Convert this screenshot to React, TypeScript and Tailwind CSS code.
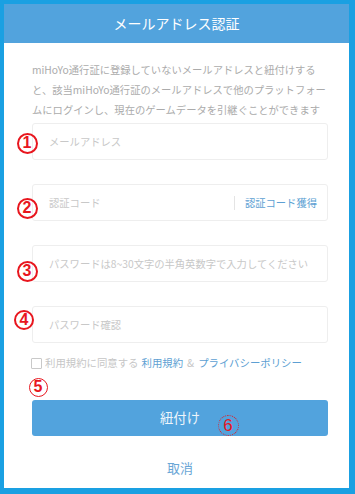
import React from "react";

const FONT = { fontFamily: '"Noto Sans CJK JP", "Noto Sans", sans-serif' };

function Mark({ n, x, y, d = 21, variant = "thick" }: { n: string; x: number; y: number; d?: number; variant?: "thick" | "thin" | "dotted" }) {
  const cls =
    variant === "thick"
      ? "border-2 border-[#e8161e] font-bold text-[16px]"
      : variant === "thin"
      ? "border border-[#e8161e] font-bold text-[16px]"
      : "border border-dotted border-[#e8161e] text-[17px]";
  return (
    <div
      className={`absolute flex items-center justify-center rounded-full text-[#e8161e] leading-none ${cls}`}
      style={{ left: x - d / 2, top: y - d / 2, width: d, height: d, fontFamily: '"Liberation Sans", "Noto Sans", sans-serif' }}
    >
      {n}
    </div>
  );
}

function Field({ placeholder, extra }: { placeholder: string; extra?: boolean }) {
  return (
    <div className="h-[37px] rounded-[3px] border border-[#eeeeee] bg-white flex items-center pl-[16px] pr-[10px]">
      <span className="flex-1 text-[10.3px] text-[#c8c8c8] whitespace-nowrap">{placeholder}</span>
      {extra && (
        <div className="flex items-center">
          <div className="w-px h-[14px] bg-[#e4e4e4] mr-[10px]" />
          <span className="text-[10.3px] text-[#5d9fd3] whitespace-nowrap">認証コード獲得</span>
        </div>
      )}
    </div>
  );
}

export default function App() {
  return (
    <div className="relative w-[355px] h-[494px] bg-[#1aa0e2] pt-[4px] pl-[4px] pr-[6px] pb-[6px]" style={FONT}>
      <div className="w-full h-full bg-white flex flex-col">
        <div className="h-[39px] bg-[#52a3dd] flex items-center justify-center text-white text-[14px]">
          メールアドレス認証
        </div>
        <div className="flex flex-col pl-[28px] pr-[21px]">
          <div className="pt-[17px] text-[10.3px] leading-[20px] text-[#ababab] whitespace-nowrap">
            <div>miHoYo通行証に登録していないメールアドレスと紐付けする</div>
            <div>と、該当miHoYo通行証のメールアドレスで他のプラットフォー</div>
            <div>ムにログインし、現在のゲームデータを引継ぐことができます</div>
          </div>
          <div className="mt-[3px] flex flex-col gap-[24px]">
            <Field placeholder="メールアドレス" />
            <Field placeholder="認証コード" extra />
            <Field placeholder="パスワードは8~30文字の半角英数字で入力してください" />
            <Field placeholder="パスワード確認" />
          </div>
          <div className="mt-[14px] h-[12px] flex items-center text-[10.4px] whitespace-nowrap">
            <div className="w-[11px] h-[11px] border border-[#c9c9c9] rounded-[1px] mr-[3px] ml-[-1px]" />
            <span className="text-[#c6c6c6]">利用規約に同意する</span>
            <span className="text-[#5d9fd3] ml-[3px]">利用規約</span>
            <span className="text-[#c6c6c6] mx-[4px]">&amp;</span>
            <span className="text-[#5d9fd3]">プライバシーポリシー</span>
          </div>
          <div className="mt-[31px] h-[36px] rounded-[3px] bg-[#52a3dd] flex items-center justify-center text-[13.3px] text-[#eef5fb]">
            紐付け
          </div>
          <div className="mt-[22px] h-[20px] flex items-center justify-center text-[13px] text-[#6aa6d6]">
            取消
          </div>
        </div>
      </div>
      <Mark n="1" x={27} y={143} />
      <Mark n="2" x={27} y={208} />
      <Mark n="3" x={27} y={271} />
      <Mark n="4" x={24} y={320} d={20} />
      <Mark n="5" x={38} y={387} d={19} variant="thin" />
      <Mark n="6" x={228} y={425} d={21} variant="dotted" />
    </div>
  );
}
